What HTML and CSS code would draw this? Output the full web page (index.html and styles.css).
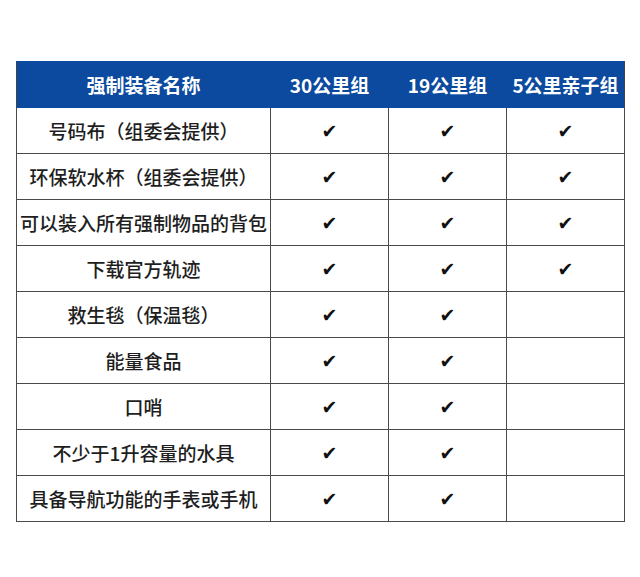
FILE: index.html
```html
<!DOCTYPE html>
<html lang="zh">
<head>
<meta charset="utf-8">
<link rel="stylesheet" href="styles.css">
</head>
<body>
<div class="page">
<table class="gear">
  <colgroup>
    <col class="c-name"><col class="c-grp"><col class="c-grp"><col class="c-grp">
  </colgroup>
  <thead>
    <tr><th>强制装备名称</th><th>30公里组</th><th>19公里组</th><th>5公里亲子组</th></tr>
  </thead>
  <tbody>
    <tr><td>号码布（组委会提供）</td><td class="ck">✔</td><td class="ck">✔</td><td class="ck">✔</td></tr>
    <tr><td>环保软水杯（组委会提供）</td><td class="ck">✔</td><td class="ck">✔</td><td class="ck">✔</td></tr>
    <tr><td>可以装入所有强制物品的背包</td><td class="ck">✔</td><td class="ck">✔</td><td class="ck">✔</td></tr>
    <tr><td>下载官方轨迹</td><td class="ck">✔</td><td class="ck">✔</td><td class="ck">✔</td></tr>
    <tr><td>救生毯（保温毯）</td><td class="ck">✔</td><td class="ck">✔</td><td class="ck"></td></tr>
    <tr><td>能量食品</td><td class="ck">✔</td><td class="ck">✔</td><td class="ck"></td></tr>
    <tr><td>口哨</td><td class="ck">✔</td><td class="ck">✔</td><td class="ck"></td></tr>
    <tr><td>不少于1升容量的水具</td><td class="ck">✔</td><td class="ck">✔</td><td class="ck"></td></tr>
    <tr><td>具备导航功能的手表或手机</td><td class="ck">✔</td><td class="ck">✔</td><td class="ck"></td></tr>
  </tbody>
</table>
</div>
</body>
</html>
```

FILE: styles.css
```css
html, body {
  margin: 0;
  padding: 0;
  background: #ffffff;
}
.page {
  padding: 61px 0 0 16px;
}
.gear {
  border-collapse: collapse;
  table-layout: fixed;
  width: 607px;
  font-family: "Noto Sans CJK SC", "Noto Sans", sans-serif;
  color: #1e1e1e;
}
.c-name { width: 254px; }
.c-grp { width: 118px; }
.gear th {
  background: #0b4a9f;
  color: #ffffff;
  font-size: 19px;
  font-weight: 700;
  height: 45px;
  padding: 0;
  border: 1px solid #0b4a9f;
  border-left-color: #444;
  border-right-color: #444;
  text-align: center;
}
.gear th + th { border-left-color: #0b4a9f; }
.gear th:not(:last-child) { border-right-color: #0b4a9f; }
.gear td {
  height: 45px;
  padding: 0;
  border: 1px solid #4a4a4a;
  text-align: center;
  font-size: 19px;
  font-weight: 500;
  white-space: nowrap;
}
.gear td.ck {
  font-family: "DejaVu Sans", sans-serif;
  font-size: 19px;
  color: #111;
}
```
